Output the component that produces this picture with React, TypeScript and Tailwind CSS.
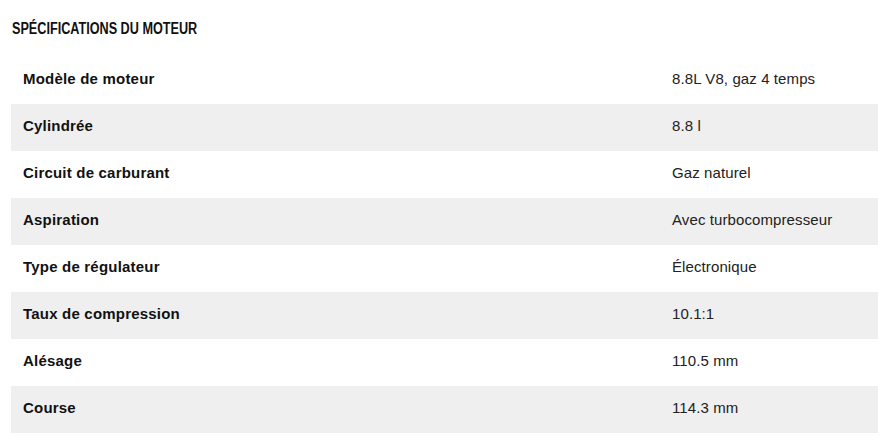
import React from "react";

const specs = [
  { label: "Modèle de moteur", value: "8.8L V8, gaz 4 temps" },
  { label: "Cylindrée", value: "8.8 l" },
  { label: "Circuit de carburant", value: "Gaz naturel" },
  { label: "Aspiration", value: "Avec turbocompresseur" },
  { label: "Type de régulateur", value: "Électronique" },
  { label: "Taux de compression", value: "10.1:1" },
  { label: "Alésage", value: "110.5 mm" },
  { label: "Course", value: "114.3 mm" },
];

export default function App() {
  return (
    <div className="w-[878px] h-[436px] bg-white pl-[11px] overflow-hidden font-['Liberation_Sans',Arial,sans-serif]">
      <div className="h-[57px] pt-[17px] pl-px">
        {/* condensed heading: Arial bold squeezed horizontally */}
        <h2 className="inline-block origin-left scale-x-[0.79] text-[16px] leading-[18px] font-bold uppercase text-[#111] whitespace-nowrap">
          Spécifications du moteur
        </h2>
      </div>
      <div>
        {specs.map((row, i) => (
          <div
            key={row.label}
            className={`grid grid-cols-[649px_1fr] h-[47px] items-center pb-[5px] ${i % 2 === 1 ? "bg-[#efefef]" : "bg-white"}`}
          >
            <div className="pl-3 text-[15px] leading-[17px] font-bold tracking-[0.2px] text-[#111]">{row.label}</div>
            <div className="pl-3 text-[15px] leading-[17px] tracking-[0.1px] text-[#222]">{row.value}</div>
          </div>
        ))}
      </div>
    </div>
  );
}
